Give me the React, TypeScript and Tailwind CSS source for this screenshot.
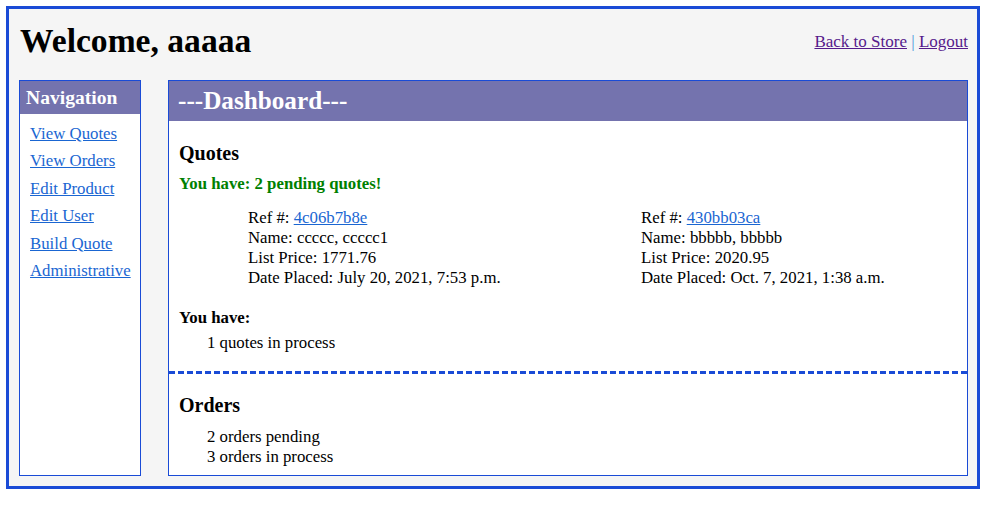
import React from "react";

const serif = { fontFamily: '"Liberation Serif", "Times New Roman", serif' };

function Quote({ refNo, name, price, date }: { refNo: string; name: string; price: string; date: string }) {
  return (
    <div className="text-[16.8px] leading-[20px] text-black">
      <div>
        Ref #: <a href="#" className="text-[#1a66d2] underline">{refNo}</a>
      </div>
      <div>Name: {name}</div>
      <div>List Price: {price}</div>
      <div>Date Placed: {date}</div>
    </div>
  );
}

export default function App() {
  const navLinks = ["View Quotes", "View Orders", "Edit Product", "Edit User", "Build Quote", "Administrative"];
  return (
    <div style={serif} className="w-[1002px] h-[505px] bg-white">
      <div className="ml-[6px] mt-[6px] w-[974px] h-[483px] border-[3px] border-[#1a4bd6] bg-[#f5f5f5] flex flex-col">
        <div className="h-[71px] flex justify-between pl-[11px] pr-[9px]">
          <h1 className="mt-[13px] text-[33.6px] leading-[37px] font-bold text-black">Welcome, aaaaa</h1>
          <div className="mt-[23px] text-[17px] leading-[20px] text-[#4a90d9]">
            <a href="#" className="text-[#551a8b] underline">Back to Store</a>
            {" | "}
            <a href="#" className="text-[#551a8b] underline">Logout</a>
          </div>
        </div>
        <div className="h-[396px] flex pl-[10px] pr-[9px] gap-[27px]">
          <div className="w-[122px] border border-[#1a4bd6] bg-white flex flex-col">
            <div className="h-[33px] bg-[#7473ae] text-white font-bold text-[19.6px] leading-[22px] pt-[6px] pl-[6px]">
              Navigation
            </div>
            <div className="flex flex-col gap-[7.4px] pt-[10px] pl-[10px] text-[16.8px] leading-[20px]">
              {navLinks.map((l) => (
                <a key={l} href="#" className="text-[#1a66d2] underline">
                  {l}
                </a>
              ))}
            </div>
          </div>
          <div className="flex-1 border border-[#1a4bd6] bg-white flex flex-col">
            <div className="h-[40px] bg-[#7473ae] text-white font-bold text-[25.2px] leading-[28px] pt-[6px] pl-[9px]">
              ---Dashboard---
            </div>
            <div className="border-b-[3px] border-dashed border-[#1a4bd6] pb-[18px]">
              <h3 className="mt-[21px] ml-[10px] text-[20px] leading-[22px] font-bold text-black">Quotes</h3>
              <div className="mt-[10px] ml-[10px] text-[16.8px] leading-[20px] font-bold text-[#008000]">
                You have: 2 pending quotes!
              </div>
              <div className="mt-[14px] pl-[79px] grid grid-cols-[393px_1fr]">
                <Quote refNo="4c06b7b8e" name="ccccc, ccccc1" price="1771.76" date="July 20, 2021, 7:53 p.m." />
                <Quote refNo="430bb03ca" name="bbbbb, bbbbb" price="2020.95" date="Oct. 7, 2021, 1:38 a.m." />
              </div>
              <div className="mt-[20px] ml-[10px] text-[16.8px] leading-[20px] font-bold text-black">You have:</div>
              <div className="mt-[5px] ml-[38px] text-[16.8px] leading-[20px] text-black">1 quotes in process</div>
            </div>
            <div>
              <h3 className="mt-[20px] ml-[10px] text-[20px] leading-[22px] font-bold text-black">Orders</h3>
              <div className="mt-[11px] ml-[38px] text-[16.8px] leading-[20px] text-black">
                <div>2 orders pending</div>
                <div>3 orders in process</div>
              </div>
            </div>
          </div>
        </div>
      </div>
    </div>
  );
}
